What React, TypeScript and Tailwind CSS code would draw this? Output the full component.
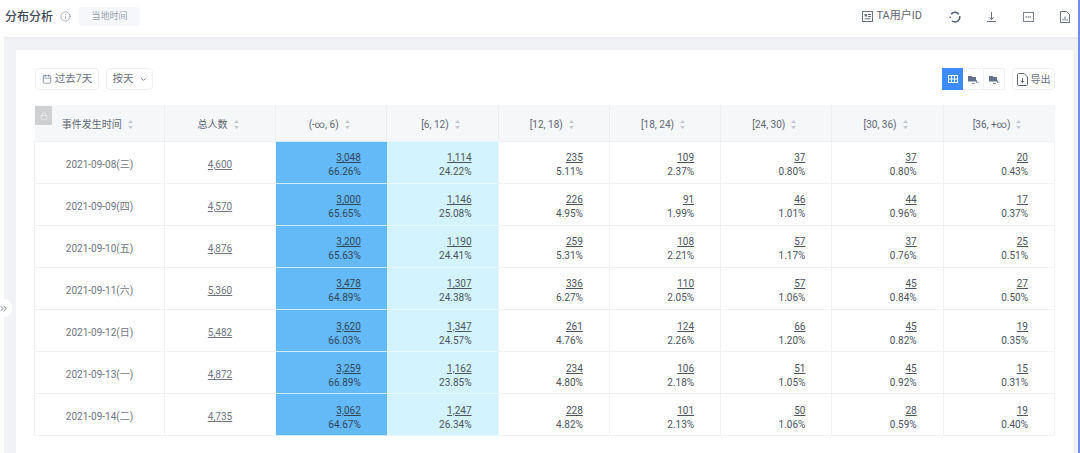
import { Calendar, ChevronDown, ChevronsRight, Info, Lock } from 'lucide-react';

const fontStack = "font-['Roboto','Noto_Sans_CJK_SC',sans-serif]";

const headers = ['(-∞, 6)', '[6, 12)', '[12, 18)', '[18, 24)', '[24, 30)', '[30, 36)', '[36, +∞)'];

const rows = [
  { date: '2021-09-08(三)', total: '4,600', cells: [['3,048', '66.26%'], ['1,114', '24.22%'], ['235', '5.11%'], ['109', '2.37%'], ['37', '0.80%'], ['37', '0.80%'], ['20', '0.43%']] },
  { date: '2021-09-09(四)', total: '4,570', cells: [['3,000', '65.65%'], ['1,146', '25.08%'], ['226', '4.95%'], ['91', '1.99%'], ['46', '1.01%'], ['44', '0.96%'], ['17', '0.37%']] },
  { date: '2021-09-10(五)', total: '4,876', cells: [['3,200', '65.63%'], ['1,190', '24.41%'], ['259', '5.31%'], ['108', '2.21%'], ['57', '1.17%'], ['37', '0.76%'], ['25', '0.51%']] },
  { date: '2021-09-11(六)', total: '5,360', cells: [['3,478', '64.89%'], ['1,307', '24.38%'], ['336', '6.27%'], ['110', '2.05%'], ['57', '1.06%'], ['45', '0.84%'], ['27', '0.50%']] },
  { date: '2021-09-12(日)', total: '5,482', cells: [['3,620', '66.03%'], ['1,347', '24.57%'], ['261', '4.76%'], ['124', '2.26%'], ['66', '1.20%'], ['45', '0.82%'], ['19', '0.35%']] },
  { date: '2021-09-13(一)', total: '4,872', cells: [['3,259', '66.89%'], ['1,162', '23.85%'], ['234', '4.80%'], ['106', '2.18%'], ['51', '1.05%'], ['45', '0.92%'], ['15', '0.31%']] },
  { date: '2021-09-14(二)', total: '4,735', cells: [['3,062', '64.67%'], ['1,247', '26.34%'], ['228', '4.82%'], ['101', '2.13%'], ['50', '1.06%'], ['28', '0.59%'], ['19', '0.40%']] },
];

function SortIcon() {
  return (
    <svg width="7" height="11" viewBox="0 0 7 11" className="ml-[5px] inline-block shrink-0">
      <path d="M3.5 1 L6 4 H1 Z" fill="#c4c8d0" />
      <path d="M3.5 10 L6 7 H1 Z" fill="#c4c8d0" />
    </svg>
  );
}

function IdIcon() {
  return (
    <svg width="11" height="11" viewBox="0 0 11 11" fill="none" stroke="#6b7280" strokeWidth="1">
      <rect x="0.5" y="0.5" width="10" height="10" />
      <rect x="2.5" y="3" width="2.5" height="2.5" fill="#6b7280" stroke="none" />
      <path d="M6 3.5h3M6 5.5h3M2.5 7.8h6" />
    </svg>
  );
}

function RefreshIcon() {
  return (
    <svg width="12" height="12" viewBox="0 0 12 12" fill="none" stroke="#55617a" strokeWidth="1.5">
      <path d="M2.2 3.2A4.7 4.7 0 0 1 9.8 3.2" />
      <path d="M10.6 5A4.7 4.7 0 0 1 3 9.8" />
      <path d="M1.4 7A4.7 4.7 0 0 1 1.3 5.6" />
    </svg>
  );
}

function DownloadIcon() {
  return (
    <svg width="11" height="12" viewBox="0 0 11 12" fill="none" stroke="#6b7280">
      <path d="M5.5 1v7" />
      <path d="M3.5 6.5l2 2 2-2" />
      <path d="M1 10.5h9" />
    </svg>
  );
}

function CsvIcon() {
  return (
    <svg width="11" height="10" viewBox="0 0 11 10" fill="none">
      <rect x="0.5" y="0.5" width="10" height="9" stroke="#7b8290" />
      <path d="M2.5 5h6" stroke="#aab0bb" strokeWidth="2" strokeDasharray="1.5 .5" />
    </svg>
  );
}

function FileChartIcon() {
  return (
    <svg width="10" height="12" viewBox="0 0 10 12" fill="none" stroke="#6b7280">
      <path d="M.5.5h6l3 3v8h-9z" />
      <path d="M3 9.5V7.5M5 9.5V5.5M7 9.5V8" />
    </svg>
  );
}

function FolderChartIcon() {
  return (
    <svg width="11" height="9" viewBox="0 0 11 9">
      <path d="M0 1h3.5l1 1H8v4.5H0z" fill="#647189" />
      <path d="M8.5 8V5M10 8V6.5" stroke="#8d97a8" strokeWidth="1" />
      <path d="M4 8.5h3" stroke="#8d97a8" strokeWidth="1" />
    </svg>
  );
}

function ExportIcon() {
  return (
    <svg width="11" height="13" viewBox="0 0 11 13" fill="none" stroke="#5f6675">
      <path d="M1.5.5h5.5l3.5 3.5v7.5a1 1 0 0 1-1 1h-8a1 1 0 0 1-1-1v-10a1 1 0 0 1 1-1z" />
      <path d="M5.5 5v4.5M3.8 8l1.7 1.7L7.2 8" />
    </svg>
  );
}

export default function App() {
  return (
    <div className={`relative flex h-[453px] w-[1080px] flex-col overflow-hidden bg-[#f1f2f6] ${fontStack}`}>
      {/* top bar */}
      <div className="flex h-[37px] shrink-0 items-center bg-white pb-[4px] pl-[5px] pr-[10px] shadow-[0_1px_2px_rgba(0,0,0,0.05)]">
        <span className="text-[12px] font-medium leading-none text-[#3f4656]">分布分析</span>
        <Info size={11} strokeWidth={1.5} className="ml-[7px] text-[#8b93a3]" />
        <span className="ml-[8px] flex h-[19px] w-[61px] items-center justify-center rounded-sm bg-[#f6f7fa] text-[9px] text-[#9aa1af]">当地时间</span>
        <div className="ml-auto flex items-center">
          <IdIcon />
          <span className="ml-[3px] text-[11px] text-[#5f6675]">TA用户ID</span>
          <span className="ml-[27px] flex"><RefreshIcon /></span>
          <span className="ml-[25px] flex"><DownloadIcon /></span>
          <span className="ml-[26px] flex"><CsvIcon /></span>
          <span className="ml-[26px] flex"><FileChartIcon /></span>
        </div>
      </div>

      {/* body */}
      <div className="flex min-h-0 flex-1">
        <div className="w-[4px] shrink-0 bg-white" />
        <div className="min-w-0 flex-1 pl-[12px] pr-[7px] pt-[13px]">
          <div className="h-full bg-white pl-[19px] pr-[18px] pt-[18px]">
            {/* toolbar */}
            <div className="flex h-[22px] items-center justify-between">
              <div className="flex gap-[7px]">
                <div className="flex h-[22px] w-[64px] items-center justify-center gap-[3px] rounded-sm border border-[#eff0f3] text-[10.5px] text-[#6b7280]">
                  <Calendar size={10} strokeWidth={1.5} className="text-[#5f6b8a]" />
                  <span>过去7天</span>
                </div>
                <div className="flex h-[22px] w-[47px] items-center justify-center gap-[6px] rounded-sm border border-[#eff0f3] text-[10.5px] text-[#6b7280]">
                  <span>按天</span>
                  <ChevronDown size={7} strokeWidth={3} />
                </div>
              </div>
              <div className="flex items-center">
                <div className="flex h-[22px] w-[21px] items-center justify-center bg-[#3e8bfb]">
                  <svg width="10" height="8" viewBox="0 0 10 8" fill="none" stroke="white">
                    <rect x="0.5" y="0.5" width="9" height="7" />
                    <path d="M0 4h10M3.5 0v8M6.5 0v8" />
                  </svg>
                </div>
                <div className="flex h-[22px] w-[21px] items-center justify-center border-y border-r border-[#f1f2f5]"><FolderChartIcon /></div>
                <div className="flex h-[22px] w-[21px] items-center justify-center border-y border-r border-[#f1f2f5]"><FolderChartIcon /></div>
                <div className="ml-[7px] flex h-[22px] w-[43px] items-center justify-center gap-[3px] rounded-sm border border-[#f1f2f5] text-[10px] text-[#6b7280]">
                  <ExportIcon />
                  <span>导出</span>
                </div>
              </div>
            </div>

            {/* table */}
            <div className="relative -ml-px mt-[15px] w-[1021px]">
              <div className="absolute left-px top-[1px] flex h-[19px] w-[17px] items-center justify-center rounded-[1px] bg-[#cfd0d2]">
                <Lock size={8} strokeWidth={1.5} className="text-white" />
              </div>
              <table className="w-[1021px] table-fixed border-collapse text-[10px]">
                <colgroup>
                  <col className="w-[130px]" />
                  <col className="w-[111px]" />
                  {headers.map((h) => (
                    <col key={h} />
                  ))}
                </colgroup>
                <thead>
                  <tr className="h-[36px] bg-[#f6f7f9] text-[#5f6675]">
                    <th className="border-r border-[#eceef1] pr-[3px] pt-[3px] font-normal">
                      <span className="inline-flex items-center">事件发生时间<SortIcon /></span>
                    </th>
                    <th className="border-r border-[#eceef1] pr-[3px] pt-[3px] font-normal">
                      <span className="inline-flex items-center">总人数<SortIcon /></span>
                    </th>
                    {headers.map((h) => (
                      <th key={h} className="border-r border-[#eceef1] pr-[3px] pt-[3px] font-normal last:border-r-0">
                        <span className="inline-flex items-center">{h}<SortIcon /></span>
                      </th>
                    ))}
                  </tr>
                </thead>
                <tbody>
                  {rows.map((row) => (
                    <tr key={row.date} className="h-[42.14px]">
                      <td className="border border-[#f1f2f5] pt-[4px] text-center text-[#70757f]">{row.date}</td>
                      <td className="border border-[#f1f2f5] pt-[4px] text-center text-[#70757f] underline">{row.total}</td>
                      {row.cells.map((cell, i) => (
                        <td
                          key={i}
                          className={
                            i === 0
                              ? 'border-y border-y-[#cfeafc] bg-[#64b9f7] pr-[26px] pt-[6px] text-right leading-[14px] text-[#2f4660]'
                              : i === 1
                                ? 'border-y border-y-[#e4f8fe] bg-[#d3f3fe] pr-[26px] pt-[6px] text-right leading-[14px] text-[#4a5563]'
                                : 'border border-[#f1f2f5] pr-[26px] pt-[6px] text-right leading-[14px] text-[#4d5460]'
                          }
                        >
                          <div className="underline">{cell[0]}</div>
                          <div>{cell[1]}</div>
                        </td>
                      ))}
                    </tr>
                  ))}
                </tbody>
              </table>
            </div>
          </div>
        </div>
      </div>

      {/* sidebar collapse handle */}
      <div className="absolute left-[-3px] top-[299px] flex h-[18px] w-[15px] items-center justify-end rounded-full bg-white pr-[3px]">
        <ChevronsRight size={11} strokeWidth={1.6} className="text-[#4b5563]" />
      </div>

      {/* right edge line */}
      <div className="absolute right-0 top-0 h-full w-[2px] bg-[#6f8fe8]" />
    </div>
  );
}
